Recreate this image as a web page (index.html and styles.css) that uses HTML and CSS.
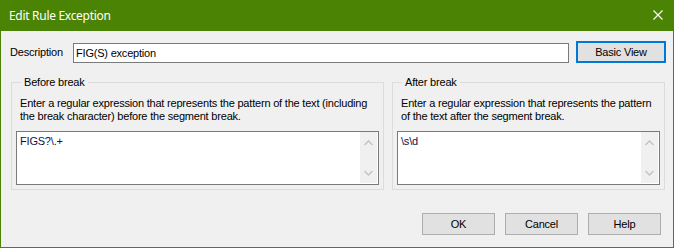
FILE: index.html
```html
<!DOCTYPE html>
<html lang="en">
<head>
<meta charset="utf-8">
<title>Edit Rule Exception</title>
<link rel="stylesheet" href="styles.css">
</head>
<body>
<div class="window">
  <div class="titlebar">
    <span class="title">Edit Rule Exception</span>
    <svg class="close" width="10" height="10" viewBox="0 0 10 10" aria-label="Close"><path d="M0.5 0.5 L9.5 9.5 M9.5 0.5 L0.5 9.5" stroke="#ffffff" stroke-width="1.1" fill="none"/></svg>
  </div>
  <div class="content">
    <div class="desc-row">
      <span class="desc-label">Description</span>
      <div class="input">FIG(S) exception</div>
      <button class="btn btn-default btn-basic">Basic View</button>
    </div>
    <div class="groups">
      <fieldset class="group group-before">
        <legend>Before break</legend>
        <p class="hint">Enter a regular expression that represents the pattern of the text (including<br>the break character) before the segment break.</p>
        <div class="textbox">
          <div class="tb-text">FIGS?\.+</div>
          <div class="vscroll">
            <svg width="9" height="6" viewBox="0 0 9 6"><path d="M0.5 5 L4.5 1 L8.5 5" stroke="#c2c2c2" stroke-width="1.3" fill="none"/></svg>
            <svg width="9" height="6" viewBox="0 0 9 6"><path d="M0.5 1 L4.5 5 L8.5 1" stroke="#c2c2c2" stroke-width="1.3" fill="none"/></svg>
          </div>
        </div>
      </fieldset>
      <fieldset class="group group-after">
        <legend>After break</legend>
        <p class="hint">Enter a regular expression that represents the pattern<br>of the text after the segment break.</p>
        <div class="textbox">
          <div class="tb-text">\s\d</div>
          <div class="vscroll">
            <svg width="9" height="6" viewBox="0 0 9 6"><path d="M0.5 5 L4.5 1 L8.5 5" stroke="#c2c2c2" stroke-width="1.3" fill="none"/></svg>
            <svg width="9" height="6" viewBox="0 0 9 6"><path d="M0.5 1 L4.5 5 L8.5 1" stroke="#c2c2c2" stroke-width="1.3" fill="none"/></svg>
          </div>
        </div>
      </fieldset>
    </div>
    <div class="actions">
      <button class="btn">OK</button>
      <button class="btn">Cancel</button>
      <button class="btn">Help</button>
    </div>
  </div>
</div>
</body>
</html>
```

FILE: styles.css
```css
html, body {
  margin: 0;
  padding: 0;
  background: #f0f0f0;
}

.window {
  width: 674px;
  height: 248px;
  box-sizing: border-box;
  border: 1px solid #4b8305;
  border-top: 0;
  background: #f0f0f0;
  display: flex;
  flex-direction: column;
  font-family: "Liberation Sans", Arial, sans-serif;
  font-size: 11px;
  letter-spacing: -0.2px;
  color: #000;
}

.titlebar {
  height: 31px;
  flex: none;
  background: #4b8305;
  display: flex;
  align-items: center;
  justify-content: space-between;
  padding: 0 10px 0 8px;
}

.title {
  font-family: "Noto Sans", "Open Sans", sans-serif;
  font-size: 12px;
  letter-spacing: -0.3px;
  color: #ffffff;
  margin-top: -1px;
}

.close {
  display: block;
  margin-top: -1px;
}

.content {
  flex: 1;
  display: flex;
  flex-direction: column;
  padding: 10px 12px 12px 9px;
}

.desc-row {
  display: flex;
  align-items: flex-start;
}

.desc-label {
  width: 63px;
  flex: none;
  line-height: 13px;
  margin-top: 5px;
}

.input {
  width: 496px;
  flex: none;
  height: 20px;
  box-sizing: border-box;
  margin-top: 2px;
  border: 1px solid #7a7a7a;
  background: #ffffff;
  padding: 0 2px;
  line-height: 18px;
}

.btn {
  font-family: "Liberation Sans", Arial, sans-serif;
  font-size: 11px;
  letter-spacing: -0.2px;
  color: #000;
  background: #e1e1e1;
  border: 1px solid #adadad;
  box-sizing: border-box;
  width: 73px;
  height: 22px;
  padding: 0;
  margin: 0;
  flex: none;
}

.btn-default {
  border: 2px solid #0078d7;
}

.btn-basic {
  width: 90px;
  margin-left: 7px;
}

.groups {
  display: flex;
  gap: 8px;
  margin-top: 13px;
  margin-left: 1px;
}

.group {
  margin: 0;
  border: 1px solid #dcdcdc;
  padding: 0 4px 4px 4px;
  box-sizing: border-box;
  min-width: 0;
  flex: none;
}

.group-before {
  width: 373px;
}

.group-after {
  width: 273px;
}

.group legend {
  margin-left: 5px;
  padding: 0 3px;
  line-height: 13px;
}

.hint {
  margin: 8px 0 8px 4px;
  line-height: 13px;
  white-space: nowrap;
}

.textbox {
  height: 54px;
  box-sizing: border-box;
  border: 1px solid #7a7a7a;
  background: #ffffff;
  display: flex;
}

.tb-text {
  flex: 1;
  padding: 3px 3px;
  line-height: 13px;
  color: #10104a;
}

.vscroll {
  width: 17px;
  margin: 0 1px 1px 0;
  background: #f0f0f0;
  display: flex;
  flex-direction: column;
  justify-content: space-between;
  align-items: center;
  padding: 8px 0 7px;
  box-sizing: border-box;
}

.vscroll svg {
  display: block;
}

.actions {
  display: flex;
  justify-content: flex-end;
  gap: 10px;
  margin-top: auto;
}
```
